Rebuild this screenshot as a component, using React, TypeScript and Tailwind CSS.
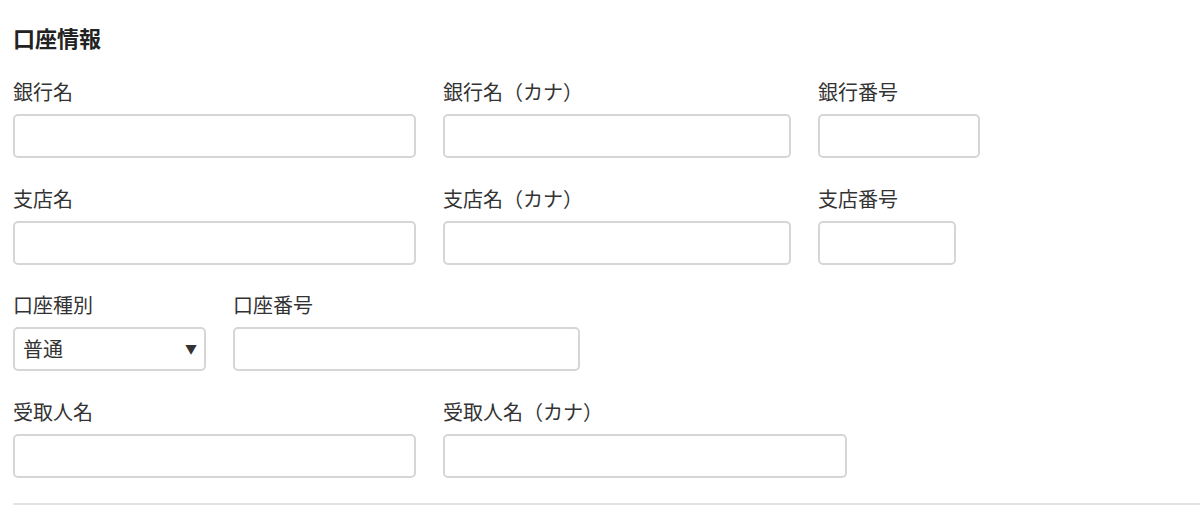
const inputCls =
  'block h-[44px] rounded-[5px] border-2 border-[#d6d6d6] bg-white px-2 text-[18px] text-[#333] outline-none';

function Field({ label, width }: { label: string; width: string }) {
  return (
    <div className="flex flex-col">
      <label className="mb-2 text-[20px] leading-[28px] text-[#333]">{label}</label>
      <input type="text" className={`${inputCls} ${width}`} />
    </div>
  );
}

export default function App() {
  return (
    <div
      className="min-h-[511px] bg-white pl-[13px] pt-[22px]"
      style={{ fontFamily: '"Noto Sans CJK JP", "Noto Sans", sans-serif' }}
    >
      <h2 className="text-[22px] font-bold leading-[30px] text-[#222]">口座情報</h2>

      <div className="mt-[26px] flex flex-col gap-[26.5px]">
        <div className="flex gap-[27px]">
          <Field label="銀行名" width="w-[403px]" />
          <Field label="銀行名（カナ）" width="w-[348px]" />
          <Field label="銀行番号" width="w-[162px]" />
        </div>

        <div className="flex gap-[27px]">
          <Field label="支店名" width="w-[403px]" />
          <Field label="支店名（カナ）" width="w-[348px]" />
          <Field label="支店番号" width="w-[138px]" />
        </div>

        <div className="flex gap-[27px]">
          <div className="flex flex-col">
            <label className="mb-2 text-[20px] leading-[28px] text-[#333]">口座種別</label>
            <div className="relative w-[193px]">
              <select
                className={`${inputCls} w-full appearance-none pl-[8px]`}
                style={{ fontSize: 20 }}
                defaultValue="普通"
              >
                <option>普通</option>
                <option>当座</option>
              </select>
              <span className="pointer-events-none absolute right-[9px] top-1/2 -translate-y-1/2 text-[12px] text-[#333]">
                ▼
              </span>
            </div>
          </div>
          <Field label="口座番号" width="w-[347px]" />
        </div>

        <div className="flex gap-[27px]">
          <Field label="受取人名" width="w-[403px]" />
          <Field label="受取人名（カナ）" width="w-[404px]" />
        </div>
      </div>

      <div className="mt-[25px] h-[2px] bg-[#e2e2e2]" />
    </div>
  );
}
